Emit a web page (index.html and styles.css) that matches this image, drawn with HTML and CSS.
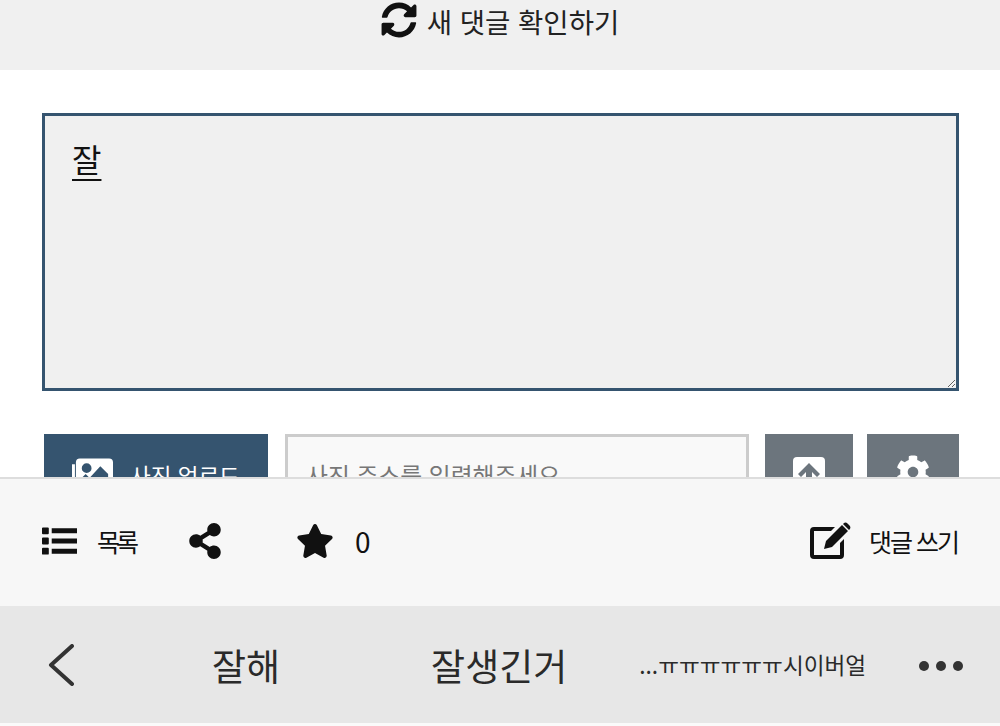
FILE: index.html
```html
<!DOCTYPE html>
<html lang="ko">
<head>
    <meta charset="UTF-8">
    <title>댓글 쓰기</title>
    <link rel="stylesheet" href="styles.css">
</head>
<body>
    <div class="refresh-bar">
        <svg class="icon-refresh" viewBox="0 0 512 512"><path d="M370.72 133.28C339.458 104.008 298.888 87.962 255.848 88c-77.458.068-144.328 53.178-162.791 126.85-1.344 5.363-6.122 9.15-11.651 9.15H24.103c-7.498 0-13.194-6.807-11.807-14.176C33.933 94.924 134.813 8 256 8c66.448 0 126.791 26.136 171.315 68.685L463.03 40.97C478.149 25.851 504 36.559 504 57.941V192c0 13.255-10.745 24-24 24H345.941c-21.382 0-32.09-25.851-16.971-40.971l41.75-41.749zM32 296h134.059c21.382 0 32.09 25.851 16.971 40.971l-41.75 41.75c31.262 29.273 71.835 45.319 114.876 45.28 77.418-.07 144.315-53.144 162.787-126.849 1.344-5.363 6.122-9.15 11.651-9.15h57.304c7.498 0 13.194 6.807 11.807 14.176C478.067 417.076 377.187 504 256 504c-66.448 0-126.791-26.136-171.315-68.685L48.97 471.03C33.851 486.149 8 475.441 8 454.059V320c0-13.255 10.745-24 24-24z"/></svg>
        <span>새 댓글 확인하기</span>
    </div>

    <div class="editor">
        <textarea class="comment-box">잘</textarea>
        <div class="upload-row">
            <div class="btn-photo">
                <svg class="icon-photo" viewBox="0 0 42 34">
                    <path d="M0 6h3v25h-3z"/>
                    <path fill-rule="evenodd" d="M8 0h30a4 4 0 0 1 4 4v24a4 4 0 0 1-4 4H8a4 4 0 0 1-4-4V4a4 4 0 0 1 4-4zM15 5a5 5 0 1 0 0 10a5 5 0 0 0 0-10zM9 27h28V16l-8-8-11 12-4-4-5 5z"/>
                </svg>
                <span>사진 업로드</span>
            </div>
            <div class="url-field">사진 주소를 입력해주세요</div>
            <div class="btn-grey btn-send">
                <svg class="icon-send" viewBox="0 0 32 32">
                    <path fill="#fff" d="M4 0h24a4 4 0 0 1 4 4v24a4 4 0 0 1-4 4H4a4 4 0 0 1-4-4V4a4 4 0 0 1 4-4z"/>
                    <path fill="#6c757d" d="M16 6L5 17l3 3 5-5v11h6V15l5 5 3-3z"/>
                </svg>
            </div>
            <div class="btn-grey btn-gear">
                <svg class="icon-gear" viewBox="0 0 512 512"><path d="M487.4 315.7l-42.6-24.6c4.3-23.2 4.3-47 0-70.2l42.6-24.6c4.9-2.8 7.1-8.6 5.5-14-11.1-35.6-30-67.8-54.7-94.6-3.8-4.1-10-5.1-14.8-2.3L380.8 110c-17.9-15.4-38.5-27.3-60.8-35.1V25.8c0-5.6-3.9-10.5-9.4-11.7-36.7-8.2-74.3-7.8-109.2 0-5.5 1.2-9.4 6.1-9.4 11.7V75c-22.2 7.9-42.8 19.8-60.8 35.1L88.7 85.5c-4.9-2.8-11-1.9-14.8 2.3-24.7 26.7-43.6 58.9-54.7 94.6-1.7 5.4.6 11.2 5.5 14L67.3 221c-4.3 23.2-4.3 47 0 70.2l-42.6 24.6c-4.9 2.8-7.1 8.6-5.5 14 11.1 35.6 30 67.8 54.7 94.6 3.8 4.1 10 5.1 14.8 2.3l42.6-24.6c17.9 15.4 38.5 27.3 60.8 35.1v49.2c0 5.6 3.9 10.5 9.4 11.7 36.7 8.2 74.3 7.8 109.2 0 5.5-1.2 9.4-6.1 9.4-11.7v-49.2c22.2-7.9 42.8-19.8 60.8-35.1l42.6 24.6c4.9 2.8 11 1.9 14.8-2.3 24.7-26.7 43.6-58.9 54.7-94.6 1.5-5.5-.7-11.3-5.6-14.1zM256 336c-44.1 0-80-35.9-80-80s35.9-80 80-80 80 35.9 80 80-35.9 80-80 80z"/></svg>
            </div>
        </div>
    </div>

    <div class="toolbar">
        <svg class="icon-list" viewBox="0 0 36 28">
            <path d="M0 1a1 1 0 0 1 1-1h5a1 1 0 0 1 1 1v5a1 1 0 0 1-1 1H1a1 1 0 0 1-1-1zM0 11.500a1 1 0 0 1 1-1h5a1 1 0 0 1 1 1v5a1 1 0 0 1-1 1H1a1 1 0 0 1-1-1zM0 22a1 1 0 0 1 1-1h5a1 1 0 0 1 1 1v5a1 1 0 0 1-1 1H1a1 1 0 0 1-1-1z"/>
            <path d="M10 1h26v5H10zM10 11.500h26v5H10zM10 22h26v5H10z"/>
        </svg>
        <span class="tool-label tool-list">목록</span>
        <svg class="icon-share" viewBox="0 0 448 512"><path d="M352 320c-22.608 0-43.387 7.819-59.79 20.895l-102.486-64.054a96.551 96.551 0 0 0 0-41.683l102.486-64.054C308.613 184.181 329.392 192 352 192c53.019 0 96-42.981 96-96S405.019 0 352 0s-96 42.981-96 96c0 7.158.79 14.13 2.276 20.841L155.79 180.895C139.387 167.819 118.608 160 96 160c-53.019 0-96 42.981-96 96s42.981 96 96 96c22.608 0 43.387-7.819 59.79-20.895l102.486 64.054A96.301 96.301 0 0 0 256 416c0 53.019 42.981 96 96 96s96-42.981 96-96-42.981-96-96-96z"/></svg>
        <svg class="icon-star" viewBox="0 0 576 512"><path d="M259.3 17.8L194 150.2 47.9 171.5c-26.2 3.8-36.7 36.1-17.7 54.6l105.7 103-25 145.5c-4.5 26.3 23.2 46 46.4 33.7L288 439.6l130.7 68.7c23.2 12.2 50.9-7.4 46.4-33.7l-25-145.5 105.7-103c19-18.5 8.5-50.8-17.7-54.6L382 150.2 316.7 17.8c-11.7-23.6-45.6-23.9-57.4 0z"/></svg>
        <span class="star-count">0</span>
        <svg class="icon-write" viewBox="0 0 41 37">
            <path d="M4 5h21l-4 4H4v24h26V21l4-4v16a4 4 0 0 1-4 4H4a4 4 0 0 1-4-4V9a4 4 0 0 1 4-4z"/>
            <path d="M32 3l6 6-16 16-8 2 2-8zM33.500 1.500a3 3 0 0 1 4 0l2 2a3 3 0 0 1 0 4l-.5.5-6-6z"/>
        </svg>
        <span class="tool-label tool-write">댓글 쓰기</span>
    </div>

    <div class="phone-bar">
        <svg class="icon-back" viewBox="0 0 26 42"><path d="M24 2L3 21l21 19"/></svg>
        <span class="word word-first">잘해</span>
        <span class="word word-second">잘생긴거</span>
        <span class="word-small">...ㅠㅠㅠㅠㅠㅠ시이버얼</span>
        <div class="dots"><i></i><i></i><i></i></div>
    </div>
    <div class="bottom-strip"></div>
</body>
</html>
```

FILE: styles.css
```css
body {
    margin: 0;
    height: 726px;
    overflow: hidden;
    display: flex;
    flex-direction: column;
    background: #fff;
    color: #222;
    font-family: "Noto Sans CJK KR", "Noto Sans", sans-serif;
}
svg {
    display: block;
    flex: none;
}

.refresh-bar {
    height: 70px;
    flex: none;
    background: #f0f0f0;
    display: flex;
    justify-content: center;
    align-items: flex-start;
    gap: 10px;
    padding-top: 2px;
    box-sizing: border-box;
    font-size: 27.5px;
    line-height: 38px;
}
.icon-refresh {
    width: 36px;
    height: 36px;
    fill: #111;
}

.editor {
    flex: 1;
    min-height: 0;
    overflow: hidden;
    padding: 43px 41px 0 42px;
}
.comment-box {
    display: block;
    width: 917px;
    height: 278px;
    box-sizing: border-box;
    margin: 0;
    padding: 19px 27px 16px;
    border: 3px solid #35546f;
    border-radius: 0;
    outline: none;
    background: #f0f0f0;
    color: #111;
    font-family: inherit;
    font-size: 32px;
    line-height: 46px;
    text-decoration: underline 2px;
    text-decoration-skip-ink: none;
    text-underline-offset: 7px;
}

.upload-row {
    display: flex;
    margin: 43px 0 0 2px;
    height: 80px;
}
.btn-photo {
    width: 224px;
    background: #35546f;
    color: #fff;
    display: flex;
    align-items: flex-start;
    gap: 17px;
    padding: 23px 0 0 28px;
    box-sizing: border-box;
    font-size: 22.5px;
    line-height: 36px;
    white-space: nowrap;
}
.icon-photo {
    width: 41px;
    height: 34px;
    fill: #fff;
    margin-top: 1px;
}
.url-field {
    width: 464px;
    margin-left: 17px;
    box-sizing: border-box;
    border: 3px solid #ccc;
    background: #f9f9f9;
    color: #777;
    padding: 20px 0 0 18px;
    font-size: 23.8px;
    line-height: 36px;
}
.btn-grey {
    background: #6c757d;
    display: flex;
    justify-content: center;
    align-items: flex-start;
}
.btn-send {
    width: 88px;
    margin-left: 16px;
    padding-top: 23px;
    box-sizing: border-box;
}
.btn-gear {
    width: 92px;
    margin-left: 14px;
    padding-top: 21px;
    box-sizing: border-box;
}
.icon-send {
    width: 32px;
    height: 32px;
}
.icon-gear {
    width: 34px;
    height: 34px;
    fill: #fff;
}

.toolbar {
    height: 129px;
    flex: none;
    box-sizing: border-box;
    border-top: 2px solid #ddd;
    background: #f7f7f7;
    display: flex;
    align-items: center;
    padding: 0 42px 4px 42px;
    color: #111;
}
.tool-label {
    font-size: 25px;
    line-height: 36px;
}
.icon-list {
    width: 35px;
    height: 28px;
    fill: #111;
}
.tool-list {
    margin-left: 20px;
    letter-spacing: -4px;
}
.icon-share {
    width: 32px;
    height: 36px;
    fill: #111;
    margin-left: 54px;
}
.icon-star {
    width: 38px;
    height: 34px;
    fill: #111;
    margin-left: 75px;
}
.star-count {
    margin-left: 21px;
    font-size: 28px;
    line-height: 36px;
}
.icon-write {
    width: 41px;
    height: 37px;
    fill: #111;
    margin-left: auto;
}
.tool-write {
    margin-left: 18px;
    letter-spacing: -2px;
    white-space: nowrap;
}

.phone-bar {
    height: 117px;
    flex: none;
    background: #e7e7e7;
    display: flex;
    align-items: center;
    padding: 0 37px 0 48px;
    color: #2a2a2a;
}
.icon-back {
    width: 26px;
    height: 42px;
    fill: none;
    stroke: #333;
    stroke-width: 4;
    stroke-linecap: round;
    stroke-linejoin: round;
}
.word {
    font-size: 37px;
    line-height: 50px;
    white-space: nowrap;
}
.word-first {
    margin-left: 138px;
}
.word-second {
    margin-left: 151px;
}
.word-small {
    margin-left: 72px;
    font-size: 22.6px;
    line-height: 34px;
    white-space: nowrap;
}
.dots {
    margin-left: auto;
    margin-top: 2px;
    display: flex;
    gap: 7px;
}
.dots i {
    width: 10px;
    height: 10px;
    border-radius: 50%;
    background: #333;
}

.bottom-strip {
    flex: none;
    height: 3px;
    background: #fafafa;
}
```
